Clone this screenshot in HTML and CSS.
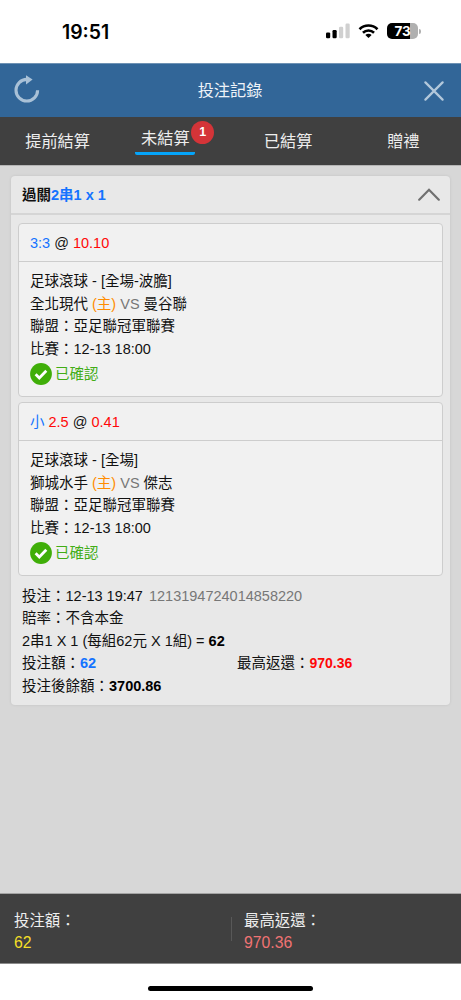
FILE: index.html
```html
<!DOCTYPE html>
<html lang="zh-Hant">
<head>
<meta charset="utf-8">
<meta name="viewport" content="width=device-width, initial-scale=1">
<title>投注記錄</title>
<link rel="stylesheet" href="styles.css">
</head>
<body>
<div class="screen">
  <div class="status">
    <span class="clock">19:51</span>
    <div class="indicators">
      <svg class="signal" width="24" height="16" viewBox="0 0 24 16"><rect x="0" y="9.4" width="4.2" height="5.8" rx="1.2"/><rect x="6.5" y="7" width="4.2" height="8.2" rx="1.2"/><rect x="13" y="3.8" width="4.2" height="11.4" rx="1.2" fill="#d0d0d0"/><rect x="19.5" y="0.6" width="4.2" height="14.6" rx="1.2" fill="#d0d0d0"/></svg>
      <svg class="wifi" width="21" height="16" viewBox="0 0 22 16"><path d="M1.6 6.1a13.4 13.4 0 0 1 18.8 0" fill="none" stroke="#000" stroke-width="2.8"/><path d="M5.2 9.8a8.3 8.3 0 0 1 11.6 0" fill="none" stroke="#000" stroke-width="2.7"/><path d="M7.7 12.2a4.7 4.7 0 0 1 6.6 0L11 15.4z"/></svg>
      <div class="battery"><span>73</span></div><i class="battery-tip"></i>
    </div>
  </div>
  <header class="titlebar">
    <svg class="refresh" width="27" height="28" viewBox="0 0 27 28"><path d="M23.6 15.2A10.8 10.8 0 1 1 12.8 4.4" fill="none" stroke="#a9c1d7" stroke-width="3.1"/><path d="M12 0.2L18.6 4.6L12 9.4z" fill="#a9c1d7"/></svg>
    <h1>投注記錄</h1>
    <svg class="close" width="20" height="20" viewBox="0 0 20 20"><path d="M1.4 1.4l17.2 17.2M18.6 1.4L1.4 18.6" stroke="#b3c8db" stroke-width="2.2" stroke-linecap="round"/></svg>
  </header>
  <nav class="tabs">
    <a>提前結算</a>
    <a class="active"><span>未結算</span><b class="badge">1</b></a>
    <a>已結算</a>
    <a>贈禮</a>
  </nav>
  <main class="content">
    <section class="slip">
      <div class="slip-head">
        <span>過關<em class="blue">2串1 x 1</em></span>
        <svg width="22" height="13" viewBox="0 0 22 13"><path d="M1.2 11.7L11 1.7l9.8 10" fill="none" stroke="#707070" stroke-width="2.2" stroke-linecap="round"/></svg>
      </div>
      <div class="bets">
        <article class="bet">
          <div class="bet-head"><span class="blue">3:3</span> @ <span class="red">10.10</span></div>
          <div class="bet-body">
            <p>足球滾球 - [全場-波膽]</p>
            <p>全北現代 <span class="orange">(主)</span> <span class="gray">VS</span> 曼谷聯</p>
            <p>聯盟：亞足聯冠軍聯賽</p>
            <p>比賽：12-13 18:00</p>
            <div class="confirmed"><svg width="22" height="22" viewBox="0 0 22 22"><circle cx="11" cy="11" r="10.9" fill="#3fae08"/><path d="M5.6 11.2l3.7 3.7 7-7.1" fill="none" stroke="#fff" stroke-width="2.8"/></svg><span>已確認</span></div>
          </div>
        </article>
        <article class="bet">
          <div class="bet-head"><span class="blue">小</span> <span class="red">2.5</span> @ <span class="red">0.41</span></div>
          <div class="bet-body">
            <p>足球滾球 - [全場]</p>
            <p>獅城水手 <span class="orange">(主)</span> <span class="gray">VS</span> 傑志</p>
            <p>聯盟：亞足聯冠軍聯賽</p>
            <p>比賽：12-13 18:00</p>
            <div class="confirmed"><svg width="22" height="22" viewBox="0 0 22 22"><circle cx="11" cy="11" r="10.9" fill="#3fae08"/><path d="M5.6 11.2l3.7 3.7 7-7.1" fill="none" stroke="#fff" stroke-width="2.8"/></svg><span>已確認</span></div>
          </div>
        </article>
      </div>
      <div class="summary">
        <p>投注：12-13 19:47 <span class="gray serial">1213194724014858220</span></p>
        <p>賠率：不含本金</p>
        <p>2串1 X 1 (每組62元 X 1組) = <b>62</b></p>
        <div class="split"><p>投注額：<b class="blue">62</b></p><p>最高返還：<b class="red payout">970.36</b></p></div>
        <p>投注後餘額：<b>3700.86</b></p>
      </div>
    </section>
  </main>
  <footer class="totals">
    <div class="total"><span>投注額：</span><strong class="yellow">62</strong></div>
    <div class="total"><span>最高返還：</span><strong class="pink">970.36</strong></div>
  </footer>
  <div class="home"><i></i></div>
</div>
</body>
</html>
```
FILE: styles.css
```css
* { box-sizing: border-box; }
body { margin: 0; background: #fff; font-family: "Liberation Sans", "Noto Sans CJK TC", sans-serif; font-size: 14.5px; color: #111; }
p, h1 { margin: 0; }
.screen { width: 461px; height: 1000px; display: flex; flex-direction: column; overflow: hidden; }
.status { height: 63px; flex: none; display: flex; justify-content: space-between; align-items: center; padding: 0 40px 0 62px; }
.clock { font: 600 19.4px/24px Inter, sans-serif; color: #000; }
.indicators { display: flex; align-items: center; margin-top: -1px; }
.wifi { margin-left: 8px; }
.battery { width: 31px; height: 16px; margin-left: 8px; border-radius: 5px; background: linear-gradient(90deg, #000 73%, #b0b0b0 73%); color: #fff; font: 700 13.5px/16px Inter, sans-serif; text-align: center; letter-spacing: -.2px; }
.battery-tip { width: 2px; height: 5px; margin-left: 1px; border-radius: 0 2px 2px 0; background: #b0b0b0; }
.titlebar { height: 54px; flex: none; background: #326698; border-top: 1px solid #6e92b4; display: flex; align-items: center; justify-content: space-between; padding: 0 17px 0 14px; }
.titlebar h1 { font-size: 16.2px; font-weight: 400; line-height: 24px; color: #eef3f8; padding: 0 0 2px 2px; }
.refresh { margin-right: -7px; margin-top: -4px; }
.tabs { height: 48px; flex: none; background: #404040; display: grid; grid-template-columns: repeat(4, 1fr); color: #eee; font-size: 16.2px; line-height: 24px; }
.tabs a { display: flex; align-items: center; justify-content: center; }
.tabs .active { position: relative; align-items: flex-start; padding: 9px 15px 0 0; }
.tabs .active span { width: 60px; height: 29px; text-align: center; border-bottom: 3px solid #04a4fa; border-radius: 2px; }
.badge { position: absolute; left: 76px; top: 4px; width: 23px; height: 23px; border-radius: 50%; background: #d43438; color: #fff; font-size: 12.5px; line-height: 22px; text-align: center; }
.content { height: 728px; flex: none; background: #d7d7d7; border-top: 1px solid #b5b5b5; padding: 10px 11px 0 11px; }
.slip { height: 529px; background: #e8e8e8; border-radius: 4px; box-shadow: 0 0 3px rgba(0,0,0,.1); }
.slip-head { height: 39px; border-bottom: 2px solid #d5d5d5; display: flex; align-items: center; justify-content: space-between; padding: 0 10px 0 11px; font-weight: 700; line-height: 22px; }
.slip-head em { font-style: normal; }
.bets { padding: 8px 7px 0 7px; display: flex; flex-direction: column; gap: 5px; }
.bet { height: 174px; border: 1.5px solid #cdcdcd; border-radius: 4px; background: #f1f1f1; }
.bet-head { height: 38px; border-bottom: 1px solid #cdcdcd; padding: 0 11px; line-height: 38px; overflow: hidden; }
.bet-body { padding: 8.4px 11px 0; }
.bet-body p, .summary p { height: 22.5px; line-height: 22.5px; white-space: nowrap; }
.confirmed { display: flex; align-items: center; gap: 3px; height: 24px; margin-top: 1.6px; color: #41ad16; line-height: 22px; }
.summary { padding: 8.6px 11px 0; }
.serial { margin-left: 2px; }
.split { display: grid; grid-template-columns: 215px 1fr; }
.blue { color: #1473ff; }
.red { color: #ff0808; }
.orange { color: #ff8c00; }
.gray { color: #777; }
.summary b { color: #000; }
.summary b.blue { color: #1473ff; }
.summary b.red { color: #ff0808; }
.payout { font-size: 14px; }
.totals { height: 71px; flex: none; background: #404040; border-top: 1px solid #a3a3a3; border-bottom: 1px solid #8b8b8b; display: grid; grid-template-columns: 231px 230px; align-items: center; color: #eee; font-size: 15.4px; }
.total { height: 48px; display: flex; flex-direction: column; padding-left: 14px; padding-top: 5px; line-height: 22px; }
.total + .total { padding-left: 13px; background: linear-gradient(#585858, #585858) 0 12px / 1px 24px no-repeat; }
.total span, .total strong { height: 22px; line-height: 22px; }
.total strong { font-weight: 400; font-size: 15.8px; }
.yellow { color: #f5df27; }
.pink { color: #ef7373; }
.home { flex: 1; display: flex; justify-content: center; padding-top: 22px; }
.home i { width: 165px; height: 5px; border-radius: 3px; background: #000; }
```
